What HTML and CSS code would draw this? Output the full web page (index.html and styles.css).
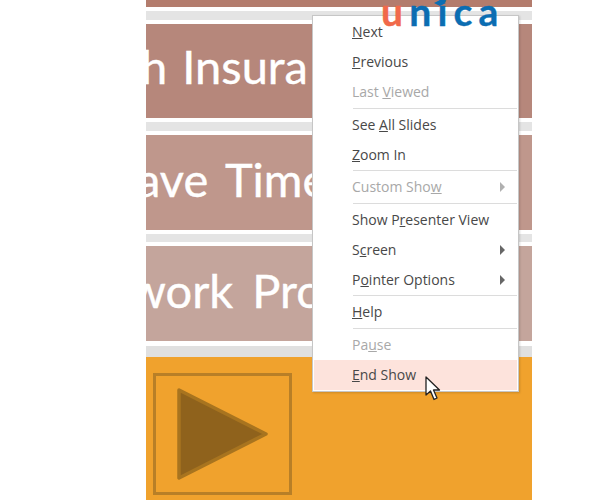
FILE: index.html
```html
<!DOCTYPE html>
<html lang="en">

<head>
  <meta charset="UTF-8">
  <title>End Show menu</title>
  <link rel="stylesheet" href="styles.css">
</head>

<body>
  <div class="slide">
    <div class="band band0"></div>
    <div class="gap"></div>
    <div class="band band1"><span class="big big1">h Insura</span></div>
    <div class="gap"></div>
    <div class="band band2"><span class="big big2">ave Time</span></div>
    <div class="gap gap-thin"></div>
    <div class="band band3"><span class="big big3">work Pro</span></div>
    <div class="gap gap-last"></div>
    <div class="orange">
      <div class="playbox">
        <svg width="133" height="116" viewBox="0 0 133 116">
          <polygon points="23,14 110,58 23,102" fill="#8f621c" stroke="#a8741f" stroke-width="3.5" stroke-linejoin="round" />
        </svg>
      </div>
    </div>
  </div>

  <div class="menu">
    <div class="item"><u>N</u>ext</div>
    <div class="item"><u>P</u>revious</div>
    <div class="item off">Last <u>V</u>iewed</div>
    <div class="sep"></div>
    <div class="item">See <u>A</u>ll Slides</div>
    <div class="item"><u>Z</u>oom In</div>
    <div class="sep"></div>
    <div class="item off">Custom Sho<u>w</u><span class="arrow"></span></div>
    <div class="sep"></div>
    <div class="item">Show P<u>r</u>esenter View</div>
    <div class="item">S<u>c</u>reen<span class="arrow"></span></div>
    <div class="item">P<u>o</u>inter Options<span class="arrow"></span></div>
    <div class="sep"></div>
    <div class="item"><u>H</u>elp</div>
    <div class="sep"></div>
    <div class="item off">Pa<u>u</u>se</div>
    <div class="item hover"><u>E</u>nd Show</div>
  </div>

  <svg class="cursor" width="18" height="26" viewBox="0 0 18 26">
    <path d="M1 1 L1 19 L5.5 15 L9 23.5 L12 22 L8.5 14 L14.5 14 Z" fill="#fff" stroke="#222" stroke-width="1.3" stroke-linejoin="round" />
  </svg>

  <div class="logo"><span class="logo-u">u</span>nica</div>
  <svg class="cap" width="12" height="6" viewBox="0 0 12 6">
    <polygon points="6,0 12,3 6,6 0,3" fill="#0b6db2" />
  </svg>
</body>

</html>
```

FILE: styles.css
```css
body {
  margin: 0;
  background-color: #fff;
  width: 600px;
  height: 500px;
  overflow: hidden;
  position: relative;
  font-family: "Open Sans", sans-serif;
}

.slide {
  width: 386px;
  height: 500px;
  margin-left: 146px;
  display: flex;
  flex-direction: column;
  overflow: hidden;
}

.band {
  display: flex;
  align-items: center;
  overflow: hidden;
  flex: none;
}

.band0 {
  height: 7px;
  background-color: #b37c6d;
}

.band1 {
  height: 94px;
  background-color: #b6877b;
}

.band2 {
  height: 95px;
  background-color: #bf978c;
}

.band3 {
  height: 95px;
  background-color: #c4a59c;
}

.gap {
  height: 9px;
  flex: none;
  background-color: #e4e4e4;
  border-top: 4px solid #fff;
  border-bottom: 4px solid #fff;
}

.gap-thin {
  height: 8px;
}

.gap-last {
  height: 11px;
  border-bottom: 0;
  border-top-width: 5px;
  background-color: #e0e0e0;
}

.big {
  font-family: "Lato", sans-serif;
  font-size: 47px;
  color: #fff;
  white-space: nowrap;
  -webkit-text-stroke: 0.4px #fff;
}

.big1 {
  margin-left: -5px;
  margin-top: -10px;
  word-spacing: 3px;
}

.big2 {
  margin-left: -9px;
  margin-top: -8px;
  word-spacing: 6px;
}

.big3 {
  margin-left: -17px;
  margin-top: -8px;
  word-spacing: 7px;
}

.orange {
  flex: 1;
  background-color: #f0a22d;
  padding: 16px 0 0 7px;
}

.playbox {
  width: 133px;
  height: 116px;
  border: 3px solid #b87f27;
}

.playbox svg {
  display: block;
}

.menu {
  position: absolute;
  left: 312px;
  top: 15px;
  width: 203px;
  padding: 1px;
  background-color: #fff;
  border: 1px solid #c6c6c6;
  box-shadow: 1px 1px 2px rgba(0, 0, 0, 0.15);
  font-size: 14px;
  color: #484848;
}

.item {
  height: 30px;
  line-height: 30px;
  padding-left: 38px;
  position: relative;
  white-space: nowrap;
}

.off {
  color: #a8a8a8;
}

.hover {
  background-color: #fde3dc;
}

.sep {
  height: 1px;
  margin: 0.75px 0 0.75px 39px;
  background-color: #dcdcdc;
}

.arrow {
  position: absolute;
  right: 12px;
  top: 10px;
  border-left: 5px solid #666;
  border-top: 5px solid transparent;
  border-bottom: 5px solid transparent;
}

.off .arrow {
  border-left-color: #b0b0b0;
}

.cursor {
  position: absolute;
  left: 425px;
  top: 376px;
}

.logo {
  position: absolute;
  left: 381px;
  top: -5px;
  font-family: "Lato", sans-serif;
  font-weight: 700;
  font-size: 39px;
  letter-spacing: 6.2px;
  color: #0b6db2;
  line-height: 32px;
  white-space: nowrap;
  -webkit-text-stroke: 0.4px;
}

.logo-u {
  color: #f1694a;
}

.cap {
  position: absolute;
  left: 434px;
  top: 0;
}
```
